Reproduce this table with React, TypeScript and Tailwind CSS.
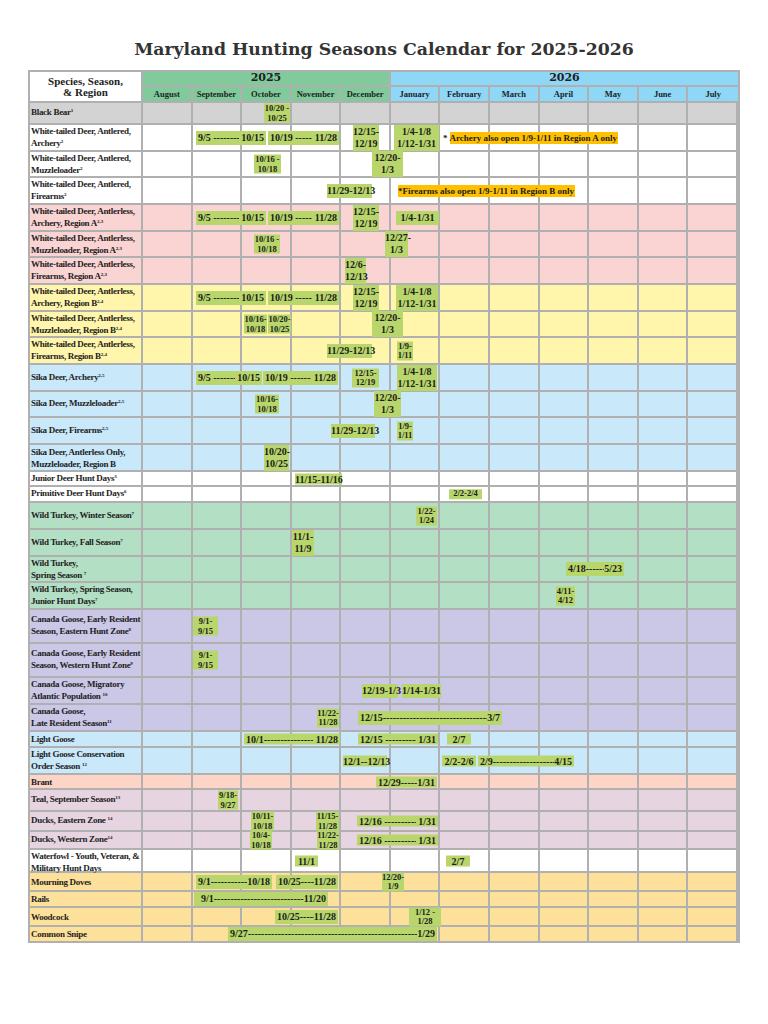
import clsx from 'clsx';

type Bar = { x1: number; x2: number; t?: string; a?: string; b?: string; sm?: boolean };
type Note = { x: number; pre?: string; text: string };
type Row = {
  lines: string[];
  sup?: string;
  bg: string;
  h: string;
  short?: boolean;
  bars: Bar[];
  note?: Note;
};

const MONTHS = [
  'August',
  'September',
  'October',
  'November',
  'December',
  'January',
  'February',
  'March',
  'April',
  'May',
  'June',
  'July',
];

// bars are stored in page pixels; rows start inside the 2px outer border
const ROW_X = 30;

const GRAY = 'bg-[#d3d3d3]';
const WHITE = 'bg-white';
const PINK = 'bg-[#fad3d3]';
const YELLOW = 'bg-[#fff6ab]';
const SKY = 'bg-[#c9e8fa]';
const MINT = 'bg-[#b3dfc4]';
const LILAC = 'bg-[#cbc7e6]';
const PEACH = 'bg-[#fdd5c6]';
const MAUVE = 'bg-[#e6d5e1]';
const SAND = 'bg-[#fde19b]';

const archery: Bar[] = [
  { x1: 196, x2: 266, a: '9/5 ', b: ' 10/15' },
  { x1: 268, x2: 339, a: '10/19 ', b: ' 11/28' },
];

const rows: Row[] = [
  { lines: ['Black Bear'], sup: '1', bg: GRAY, h: 'h-[22px]', bars: [{ x1: 264, x2: 290, t: '10/20 -\n10/25', sm: true }] },
  {
    lines: ['White-tailed Deer, Antlered,', 'Archery'],
    sup: '2',
    bg: WHITE,
    h: 'h-[27px]',
    bars: [...archery, { x1: 353, x2: 379, t: '12/15-\n12/19' }, { x1: 394, x2: 439, t: '1/4-1/8\n1/12-1/31' }],
    note: { x: 443, pre: '*', text: 'Archery also open 1/9-1/11 in Region A only' },
  },
  {
    lines: ['White-tailed Deer, Antlered,', 'Muzzleloader'],
    sup: '2',
    bg: WHITE,
    h: 'h-[26px]',
    bars: [
      { x1: 254, x2: 281, t: '10/16 -\n10/18', sm: true },
      { x1: 372, x2: 403, t: '12/20-\n1/3' },
    ],
  },
  {
    lines: ['White-tailed Deer, Antlered,', 'Firearms'],
    sup: '2',
    bg: WHITE,
    h: 'h-[27px]',
    bars: [{ x1: 327, x2: 372, t: '11/29-12/13' }],
    note: { x: 398, text: '*Firearms also open 1/9-1/11 in Region B only' },
  },
  {
    lines: ['White-tailed Deer, Antlerless,', 'Archery, Region A'],
    sup: '2,3',
    bg: PINK,
    h: 'h-[27px]',
    bars: [...archery, { x1: 353, x2: 379, t: '12/15-\n12/19' }, { x1: 396, x2: 439, t: '1/4-1/31' }],
  },
  {
    lines: ['White-tailed Deer, Antlerless,', 'Muzzleloader, Region A'],
    sup: '2,3',
    bg: PINK,
    h: 'h-[26px]',
    bars: [
      { x1: 254, x2: 280, t: '10/16 -\n10/18', sm: true },
      { x1: 385, x2: 408, t: '12/27-\n1/3' },
    ],
  },
  {
    lines: ['White-tailed Deer, Antlerless,', 'Firearms, Region A'],
    sup: '2,3',
    bg: PINK,
    h: 'h-[27px]',
    bars: [{ x1: 345, x2: 366, t: '12/6-\n12/13' }],
  },
  {
    lines: ['White-tailed Deer, Antlerless,', 'Archery, Region B'],
    sup: '2,4',
    bg: YELLOW,
    h: 'h-[27px]',
    bars: [...archery, { x1: 353, x2: 379, t: '12/15-\n12/19' }, { x1: 396, x2: 438, t: '1/4-1/8\n1/12-1/31' }],
  },
  {
    lines: ['White-tailed Deer, Antlerless,', 'Muzzleloader, Region B'],
    sup: '2,4',
    bg: YELLOW,
    h: 'h-[26px]',
    bars: [
      { x1: 244, x2: 267, t: '10/16-\n10/18', sm: true },
      { x1: 268, x2: 291, t: '10/20-\n10/25', sm: true },
      { x1: 372, x2: 403, t: '12/20-\n1/3' },
    ],
  },
  {
    lines: ['White-tailed Deer, Antlerless,', 'Firearms, Region B'],
    sup: '2,4',
    bg: YELLOW,
    h: 'h-[27px]',
    bars: [
      { x1: 327, x2: 372, t: '11/29-12/13' },
      { x1: 397, x2: 413, t: '1/9-\n1/11', sm: true },
    ],
  },
  {
    lines: ['Sika Deer, Archery'],
    sup: '2,5',
    bg: SKY,
    h: 'h-[27px]',
    bars: [
      { x1: 196, x2: 262, a: '9/5 ', b: ' 10/15' },
      { x1: 263, x2: 338, a: '10/19 ', b: ' 11/28' },
      { x1: 352, x2: 379, t: '12/15-\n12/19', sm: true },
      { x1: 397, x2: 437, t: '1/4-1/8\n1/12-1/31' },
    ],
  },
  {
    lines: ['Sika Deer, Muzzleloader'],
    sup: '2,5',
    bg: SKY,
    h: 'h-[26px]',
    bars: [
      { x1: 255, x2: 279, t: '10/16-\n10/18', sm: true },
      { x1: 374, x2: 401, t: '12/20-\n1/3' },
    ],
  },
  {
    lines: ['Sika Deer, Firearms'],
    sup: '2,5',
    bg: SKY,
    h: 'h-[27px]',
    bars: [
      { x1: 331, x2: 375, t: '11/29-12/13' },
      { x1: 397, x2: 413, t: '1/9-\n1/11', sm: true },
    ],
  },
  {
    lines: ['Sika Deer, Antlerless Only,', 'Muzzleloader, Region B'],
    bg: SKY,
    h: 'h-[27px]',
    bars: [{ x1: 264, x2: 289, t: '10/20-\n10/25' }],
  },
  {
    lines: ['Junior Deer Hunt Days'],
    sup: '3',
    bg: WHITE,
    h: 'h-[15px]',
    short: true,
    bars: [{ x1: 295, x2: 342, t: '11/15-11/16' }],
  },
  {
    lines: ['Primitive Deer Hunt Days'],
    sup: '6',
    bg: WHITE,
    h: 'h-[16px]',
    short: true,
    bars: [{ x1: 449, x2: 482, t: '2/2-2/4', sm: true }],
  },
  {
    lines: ['Wild Turkey, Winter Season'],
    sup: '7',
    bg: MINT,
    h: 'h-[27px]',
    bars: [{ x1: 416, x2: 437, t: '1/22-\n1/24', sm: true }],
  },
  {
    lines: ['Wild Turkey, Fall Season'],
    sup: '7',
    bg: MINT,
    h: 'h-[27px]',
    bars: [{ x1: 292, x2: 314, t: '11/1-\n11/9' }],
  },
  {
    lines: ['Wild Turkey,', 'Spring Season '],
    sup: '7',
    bg: MINT,
    h: 'h-[26px]',
    bars: [{ x1: 566, x2: 624, a: '4/18', b: '5/23' }],
  },
  {
    lines: ['Wild Turkey, Spring Season,', 'Junior Hunt Days'],
    sup: '7',
    bg: MINT,
    h: 'h-[27px]',
    bars: [{ x1: 556, x2: 575, t: '4/11-\n4/12', sm: true }],
  },
  {
    lines: ['Canada Goose, Early Resident', 'Season, Eastern Hunt Zone'],
    sup: '8',
    bg: LILAC,
    h: 'h-[34px]',
    bars: [{ x1: 193, x2: 218, t: '9/1-\n9/15', sm: true }],
  },
  {
    lines: ['Canada Goose, Early Resident', 'Season, Western Hunt Zone'],
    sup: '9',
    bg: LILAC,
    h: 'h-[34px]',
    bars: [{ x1: 193, x2: 218, t: '9/1-\n9/15', sm: true }],
  },
  {
    lines: ['Canada Goose, Migratory', 'Atlantic Population '],
    sup: '10',
    bg: LILAC,
    h: 'h-[27px]',
    bars: [
      { x1: 362, x2: 398, t: '12/19-1/3' },
      { x1: 402, x2: 441, t: '1/14-1/31' },
    ],
  },
  {
    lines: ['Canada Goose,', 'Late Resident Season'],
    sup: '11',
    bg: LILAC,
    h: 'h-[27px]',
    bars: [
      { x1: 317, x2: 339, t: '11/22-\n11/28', sm: true },
      { x1: 358, x2: 502, a: '12/15', b: '3/7' },
    ],
  },
  {
    lines: ['Light Goose'],
    bg: SKY,
    h: 'h-[16px]',
    short: true,
    bars: [
      { x1: 244, x2: 340, a: '10/1', b: ' 11/28' },
      { x1: 358, x2: 438, a: '12/15 ', b: ' 1/31' },
      { x1: 447, x2: 471, t: '2/7' },
    ],
  },
  {
    lines: ['Light Goose Conservation', 'Order Season '],
    sup: '12',
    bg: SKY,
    h: 'h-[27px]',
    short: true,
    bars: [
      { x1: 343, x2: 387, t: '12/1--12/13' },
      { x1: 442, x2: 476, t: '2/2-2/6' },
      { x1: 478, x2: 574, a: '2/9', b: '4/15' },
    ],
  },
  {
    lines: ['Brant'],
    bg: PEACH,
    h: 'h-[15px]',
    short: true,
    bars: [{ x1: 376, x2: 437, a: '12/29', b: '1/31' }],
  },
  {
    lines: ['Teal, September Season'],
    sup: '13',
    bg: MAUVE,
    h: 'h-[22px]',
    bars: [{ x1: 218, x2: 238, t: '9/18-\n9/27', sm: true }],
  },
  {
    lines: ['Ducks, Eastern Zone '],
    sup: '14',
    bg: MAUVE,
    h: 'h-[20px]',
    short: true,
    bars: [
      { x1: 251, x2: 274, t: '10/11-\n10/18', sm: true },
      { x1: 316, x2: 339, t: '11/15-\n11/28', sm: true },
      { x1: 357, x2: 438, a: '12/16 ', b: ' 1/31' },
    ],
  },
  {
    lines: ['Ducks, Western Zone'],
    sup: '14',
    bg: MAUVE,
    h: 'h-[18px]',
    short: true,
    bars: [
      { x1: 250, x2: 272, t: '10/4-\n10/18', sm: true },
      { x1: 317, x2: 339, t: '11/22-\n11/28', sm: true },
      { x1: 357, x2: 438, a: '12/16 ', b: ' 1/31' },
    ],
  },
  {
    lines: ['Waterfowl - Youth, Veteran, &', 'Military Hunt Days'],
    bg: WHITE,
    h: 'h-[23px]',
    short: true,
    bars: [
      { x1: 295, x2: 318, t: '11/1' },
      { x1: 446, x2: 470, t: '2/7' },
    ],
  },
  {
    lines: ['Mourning Doves'],
    bg: SAND,
    h: 'h-[19px]',
    bars: [
      { x1: 196, x2: 272, a: '9/1', b: '10/18' },
      { x1: 276, x2: 338, a: '10/25', b: '11/28' },
      { x1: 382, x2: 404, t: '12/20-\n1/9', sm: true },
    ],
  },
  {
    lines: ['Rails'],
    bg: SAND,
    h: 'h-[16px]',
    bars: [{ x1: 194, x2: 328, a: '  9/1', b: '11/20' }],
  },
  {
    lines: ['Woodcock'],
    bg: SAND,
    h: 'h-[19px]',
    bars: [
      { x1: 275, x2: 338, a: '10/25', b: '11/28' },
      { x1: 409, x2: 441, t: '1/12 -\n1/28', sm: true },
    ],
  },
  {
    lines: ['Common Snipe'],
    bg: SAND,
    h: 'h-[16px]',
    bars: [{ x1: 228, x2: 437, a: '9/27', b: '1/29' }],
  },
];

function BarView({ bar, short }: { bar: Bar; short?: boolean }) {
  const size = bar.sm
    ? 'text-[8.5px] leading-[9.5px]'
    : short
      ? 'text-[10px] leading-[11px]'
      : 'text-[10px] leading-[12px] py-px';
  return (
    <div
      style={{ left: bar.x1 - ROW_X, width: bar.x2 - bar.x1 }}
      className={clsx('absolute top-1/2 -translate-y-1/2 bg-[#b8d66b] font-bold text-[#1c1c1c]', size)}
    >
      {bar.a ? (
        <div className="flex px-[2px]">
          <span className="whitespace-pre">{bar.a}</span>
          <span className="flex-1 min-w-0 overflow-hidden whitespace-nowrap">{'-'.repeat(140)}</span>
          <span className="whitespace-pre">{bar.b}</span>
        </div>
      ) : (
        <div className="whitespace-pre text-center">{bar.t}</div>
      )}
    </div>
  );
}

function TableRow({ row }: { row: Row }) {
  return (
    <div
      className={clsx(
        'relative grid grid-cols-[113px_repeat(12,minmax(0,1fr))] border-b-2 border-[#b0b0b0]',
        row.h,
        row.bg,
      )}
    >
      <div className="flex flex-col justify-center border-r-2 border-[#b0b0b0] pl-px text-[9px] leading-[12px] font-bold tracking-[-0.3px] text-[#1e1e1e]">
        {row.lines.map((line, i) => (
          <div key={i} className="whitespace-pre">
            {line}
            {i === row.lines.length - 1 && row.sup && (
              <span className="relative -top-[3px] text-[5px] tracking-normal">{row.sup}</span>
            )}
          </div>
        ))}
      </div>
      {MONTHS.map((m) => (
        <div key={m} className="border-r-2 border-[#b0b0b0] last:border-r-0" />
      ))}
      {row.bars.map((bar, i) => (
        <BarView key={i} bar={bar} short={row.short} />
      ))}
      {row.note && (
        <div
          style={{ left: row.note.x - ROW_X }}
          className="absolute top-1/2 -translate-y-1/2 flex whitespace-nowrap text-[9px] leading-[12px] font-bold text-[#1c1c1c]"
        >
          {row.note.pre && <span className="pr-[2px]">{row.note.pre}</span>}
          <span className="bg-[#ffc000] pr-px">{row.note.text}</span>
        </div>
      )}
    </div>
  );
}

export default function App() {
  return (
    <div className="w-[768px] h-[1024px] bg-white font-['Liberation_Serif',serif]">
      <h1 className="pt-[37px] pb-[9px] text-center font-['DejaVu_Serif',serif] text-[17.3px] leading-[24px] font-bold text-[#333333]">
        Maryland Hunting Seasons Calendar for 2025-2026
      </h1>

      <div className="mx-auto w-[712px] border-x-2 border-t-2 border-[#b0b0b0]">
        <div className="grid grid-cols-[113px_repeat(12,minmax(0,1fr))] grid-rows-[15px_16px] text-[#1e1e1e]">
          <div className="row-span-2 flex items-center justify-center border-r-2 border-b-2 border-[#b0b0b0] bg-white text-center text-[11px] leading-[11px] font-bold">
            Species, Season,
            <br />
            &amp; Region
          </div>
          <div className="col-span-5 flex items-center justify-center border-r-2 border-b-2 border-[#b0b0b0] bg-[#80ca9b] font-['DejaVu_Serif',serif] text-[11px] font-bold">
            2025
          </div>
          <div className="col-span-7 flex items-center justify-center border-b-2 border-[#b0b0b0] bg-[#8ed7f7] font-['DejaVu_Serif',serif] text-[11px] font-bold">
            2026
          </div>
          {MONTHS.map((m, i) => (
            <div
              key={m}
              className={clsx(
                'flex items-center justify-center border-r-2 border-b-2 border-[#b0b0b0] text-[8.5px] font-bold last:border-r-0',
                i < 5 ? 'bg-[#80ca9b]' : 'bg-[#8ed7f7]',
              )}
            >
              {m}
            </div>
          ))}
        </div>

        {rows.map((row, i) => (
          <TableRow key={i} row={row} />
        ))}
      </div>
    </div>
  );
}
